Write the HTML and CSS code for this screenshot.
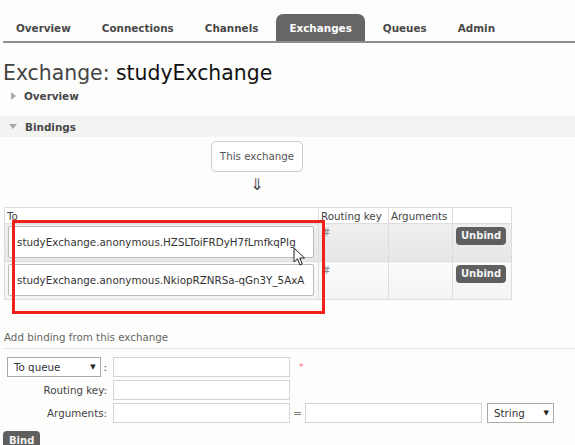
FILE: index.html
```html
<!DOCTYPE html>
<html>
<head>
<meta charset="utf-8">
<link rel="stylesheet" href="styles.css">
</head>
<body>
<div class="nav">
  <ul class="tabs">
    <li class="tab">Overview</li>
    <li class="tab">Connections</li>
    <li class="tab">Channels</li>
    <li class="tab active">Exchanges</li>
    <li class="tab">Queues</li>
    <li class="tab">Admin</li>
  </ul>
</div>
<h1 class="title"><span class="label">Exchange:</span> studyExchange</h1>
<div class="section closed"><span class="tri-right"></span>Overview</div>
<div class="section open"><span class="tri-down"></span>Bindings</div>
<div class="flow">
  <div class="this-ex">This exchange</div>
  <div class="arrow">⇓</div>
</div>
<div class="table-wrap">
  <table class="bindings">
    <colgroup><col class="w-to"><col class="w-rk"><col class="w-args"><col class="w-act"></colgroup>
    <thead>
      <tr><th>To</th><th>Routing key</th><th>Arguments</th><th></th></tr>
    </thead>
    <tbody>
      <tr class="alt1">
        <td class="c-to"><div class="qbox">studyExchange.anonymous.HZSLToiFRDyH7fLmfkqPIg</div></td>
        <td class="c-rk">#</td><td class="c-args"></td>
        <td class="c-act"><span class="btn">Unbind</span></td>
      </tr>
      <tr class="alt2">
        <td class="c-to"><div class="qbox">studyExchange.anonymous.NkiopRZNRSa-qGn3Y_5AxA</div></td>
        <td class="c-rk">#</td><td class="c-args"></td>
        <td class="c-act"><span class="btn">Unbind</span></td>
      </tr>
    </tbody>
  </table>
  <div class="annot"></div>
  <svg class="cursor" width="14" height="20" viewBox="0 0 14 20"><path d="M1 1 L1 15 L4.5 11.8 L7 18 L9.2 17 L6.8 11 L11.5 11 Z" fill="#fff" stroke="#222" stroke-width="1"/></svg>
</div>
<h3 class="add-title">Add binding from this exchange</h3>
<div class="form">
  <div class="frow">
    <div class="flabel"><span class="sel sel-q">To queue<span class="dd">▼</span></span><span class="colon">:</span></div>
    <input class="inp" type="text"><span class="req">*</span>
  </div>
  <div class="frow">
    <div class="flabel">Routing key:</div>
    <input class="inp" type="text">
  </div>
  <div class="frow">
    <div class="flabel">Arguments:</div>
    <input class="inp" type="text"><span class="eq">=</span><input class="inp" type="text">
    <span class="sel sel-s">String<span class="dd">▼</span></span>
  </div>
</div>
<div class="bind-wrap"><span class="btn bind">Bind</span></div>
</body>
</html>
```
FILE: styles.css
```css
* { box-sizing: border-box; }
html, body { margin: 0; padding: 0; }
body {
  background: #fdfdfc;
  font-family: "DejaVu Sans", Verdana, sans-serif;
  color: #484848;
  font-size: 10px;
  width: 575px;
  height: 445px;
  overflow: hidden;
}
.nav { padding-top: 14px; }
.tabs {
  list-style: none;
  margin: 0 0 0 3px;
  padding: 0;
  display: flex;
  border-bottom: 2px solid #8f8f8f;
}
.tab {
  padding: 0 13px;
  margin-right: 5px;
  height: 27px;
  line-height: 28px;
  font-weight: bold;
  font-size: 10.4px;
  color: #484848;
}
.tab.active {
  background: #666;
  color: #fff;
  border-radius: 7px 7px 0 0;
}
.title {
  margin: 17px 0 0 3px;
  font-weight: normal;
  font-size: 20.4px;
  line-height: 26px;
  color: #111;
}
.title .label { color: #444; }
.section {
  display: flex;
  align-items: center;
  font-weight: bold;
  font-size: 10.4px;
  color: #484848;
  height: 20px;
}
.section.closed { padding-left: 11px; margin-top: 0; }
.section.open {
  margin-top: 10px;
  height: 21px;
  padding-left: 9px;
  background: #f3f3f2;
}
.tri-right {
  width: 0; height: 0;
  border-top: 4px solid transparent;
  border-bottom: 4px solid transparent;
  border-left: 5px solid #aaa;
  margin-right: 8px;
}
.tri-down {
  width: 0; height: 0;
  border-left: 4px solid transparent;
  border-right: 4px solid transparent;
  border-top: 5px solid #aaa;
  margin-right: 8px;
}
.flow {
  display: flex;
  flex-direction: column;
  align-items: center;
  width: 514px;
  margin-top: 4px;
}
.this-ex {
  border: 1px solid #ccc;
  border-radius: 5px;
  padding: 0 8px;
  height: 31px;
  line-height: 29px;
  font-size: 10.3px;
  color: #555;
  background: #fff;
}
.arrow {
  font-size: 16px;
  line-height: 24px;
  color: #444;
  margin-top: 1px;
}
.table-wrap {
  position: relative;
  margin: 10px 0 0 4px;
  width: 508px;
}
.bindings {
  border-collapse: collapse;
  table-layout: fixed;
  width: 507px;
  border: 1px solid #ddd;
  background: #fff;
}
.w-to { width: 314px; }
.w-rk { width: 70px; }
.w-args { width: 64px; }
.w-act { width: 59px; }
.bindings th {
  font-weight: normal;
  text-align: left;
  font-size: 10.3px;
  color: #444;
  height: 16px;
  padding: 0 2px;
  border: 1px solid #ddd;
  line-height: 14px;
  vertical-align: bottom;
  white-space: nowrap;
  overflow: hidden;
}
.bindings td {
  border: 1px solid #ddd;
  vertical-align: top;
  padding: 2px 3px;
  height: 38px;
}
.bindings td.c-rk { color: #888; font-size: 10px; padding: 3px 3px; }
.alt1 td { background: linear-gradient(#f0f0f0, #e6e6e6); }
.alt2 td { background: linear-gradient(#fbfbfb, #f3f3f3); }
.qbox {
  border: 1px solid #bbb;
  border-radius: 2px;
  background: #fff;
  height: 32px;
  line-height: 30px;
  padding-left: 8px;
  font-size: 10.35px;
  color: #333;
  white-space: nowrap;
  width: 306px;
}
.btn {
  display: inline-block;
  background: #5f5f5f;
  color: #f4f4f4;
  font-weight: bold;
  font-size: 10px;
  border-radius: 4px;
  padding: 0 5px;
  height: 18px;
  line-height: 18px;
}
.c-act .btn { margin: 1px 0 0 0; }
.annot {
  position: absolute;
  left: 8px;
  top: 13px;
  width: 313px;
  height: 94px;
  border: 3px solid #f0201a;
  pointer-events: none;
}
.cursor {
  position: absolute;
  left: 289px;
  top: 40px;
}
.add-title {
  margin: 31px 0 0 4px;
  font-weight: normal;
  font-size: 10.3px;
  color: #666;
  padding-bottom: 5px;
  border-bottom: 1px solid #e4e4e4;
}
.form { margin-top: 8px; display: flex; flex-direction: column; gap: 3px; }
.frow { display: flex; align-items: center; height: 20px; }
.flabel {
  width: 113px;
  padding-right: 6px;
  text-align: right;
  font-size: 10.3px;
  color: #444;
  display: flex;
  justify-content: flex-end;
  align-items: center;
}
.colon { margin-left: 3px; }
.sel {
  display: inline-flex;
  align-items: center;
  justify-content: space-between;
  border: 1px solid #aaa;
  background: #fff;
  height: 20px;
  font-size: 10.3px;
  color: #333;
  padding: 0 4px 0 6px;
}
.sel-q { width: 98px; margin-left: 7px; margin-right: auto; }
.sel-s { width: 67px; margin-left: 5px; }
.dd { font-size: 7px; color: #222; }
.inp {
  width: 177px;
  height: 20px;
  border: 1px solid #d4d4d4;
  background: #fff;
  margin: 0;
  padding: 0;
}
.req { color: #f66; font-size: 9px; margin-left: 9px; }
.eq { color: #777; width: 15px; text-align: center; font-size: 10.3px; }
.bind-wrap { margin: 8px 0 0 3px; }
.btn.bind { border-radius: 4px 4px 0 0; height: 22px; padding: 1px 6px 0; }
```
